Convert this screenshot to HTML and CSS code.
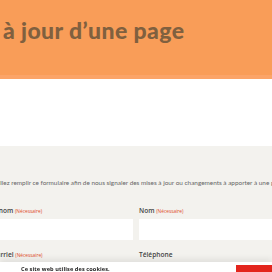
FILE: index.html
```html
<!DOCTYPE html>
<html lang="fr">
<head>
    <meta charset="UTF-8">
    <meta name="viewport" content="width=device-width, initial-scale=1.0">
    <title>Demande de mise à jour d'une page</title>
    <link rel="stylesheet" href="styles.css">
</head>
<body>
    <div class="hero">
        <h1>à jour d’une page</h1>
    </div>
    <div class="spacer"></div>
    <div class="form-area">
        <p class="intro">Veuillez remplir ce formulaire afin de nous signaler des mises à jour ou changements à apporter à une page</p>
        <div class="form-grid">
            <div class="field">
                <label>Prénom <span class="req">(Nécessaire)</span></label>
                <input type="text">
            </div>
            <div class="field">
                <label>Nom <span class="req">(Nécessaire)</span></label>
                <input type="text">
            </div>
            <div class="field">
                <label>Courriel <span class="req">(Nécessaire)</span></label>
                <input type="text">
            </div>
            <div class="field">
                <label>Téléphone</label>
                <input type="text">
            </div>
        </div>
    </div>
    <div class="cookie-bar">
        <strong>Ce site web utilise des cookies.</strong>
        <button class="cookie-btn">Tout accepter</button>
    </div>
</body>
</html>
```
FILE: styles.css
```css
html, body {
    margin: 0;
    padding: 0;
    width: 272px;
    height: 272px;
    overflow: hidden;
    font-family: "Open Sans", Arial, sans-serif;
    background-color: #fff;
}
.hero {
    height: 75px;
    background-color: #f99d58;
    border-bottom: 4px solid #fba468;
    padding-left: 3px;
}
.hero h1 {
    margin: 0;
    padding-top: 15px;
    font-family: Lato, Arial, sans-serif;
    font-weight: 900;
    font-size: 23px;
    letter-spacing: 0.4px;
    color: #80603f;
    line-height: 30px;
}
.spacer {
    height: 67px;
}
.form-area {
    background-color: #f3f2ee;
    height: 200px;
    margin-left: -12px;
    padding-top: 33px;
}
.intro {
    margin: 0 0 20px 0;
    font-family: Lato, Arial, sans-serif;
    font-size: 6.4px;
    color: #666;
    white-space: nowrap;
}
.form-grid {
    display: grid;
    grid-template-columns: 145px 146px;
    column-gap: 6px;
    row-gap: 10px;
}
.field label {
    display: block;
    font-size: 6.6px;
    font-weight: 600;
    color: #444;
    margin-bottom: 4px;
}
.req {
    font-size: 4.8px;
    font-weight: 400;
    color: #e04a2a;
}
.field input {
    display: block;
    box-sizing: border-box;
    width: 100%;
    height: 21px;
    border: none;
    background: #fff;
}
.cookie-bar {
    position: fixed;
    left: 0;
    right: 0;
    top: 262px;
    height: 10px;
    background: #fff;
    box-shadow: 0 -3px 6px rgba(0,0,0,0.08);
    display: flex;
    align-items: flex-start;
    justify-content: space-between;
    padding-left: 21px;
    overflow: hidden;
}
.cookie-bar strong {
    font-size: 5.6px;
    letter-spacing: 0.1px;
    color: #222;
    margin-top: 3px;
    line-height: 8px;
}
.cookie-btn {
    margin-top: 3px;
    width: 36px;
    height: 20px;
    border: none;
    background: #e3251d;
    color: #fff;
    font-size: 6px;
    font-weight: 700;
    text-align: left;
    padding: 0 0 0 14px;
    white-space: nowrap;
    overflow: hidden;
}
```
